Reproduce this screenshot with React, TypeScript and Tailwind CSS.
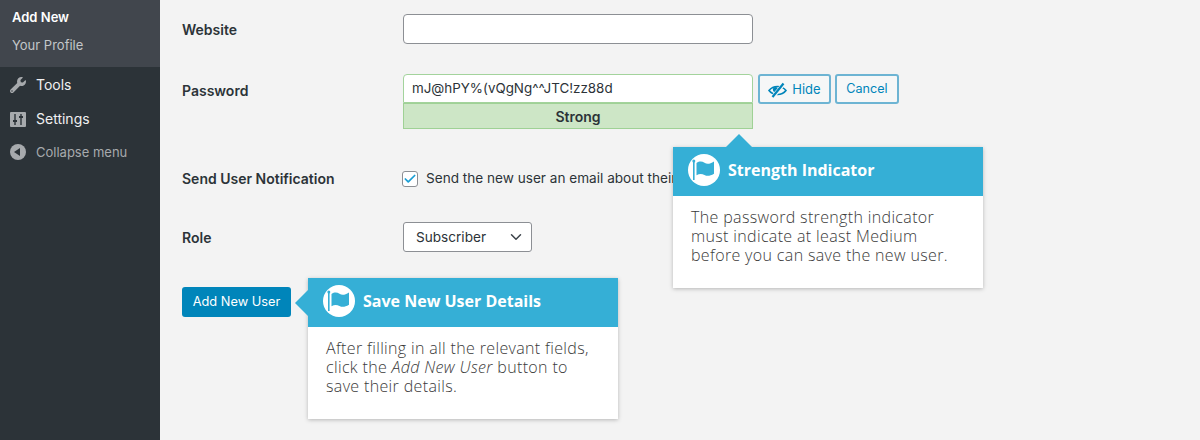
import React from "react";
import { FaWrench } from "react-icons/fa";
import { ChevronDown, Check } from "lucide-react";

const FlagIcon = () => (
  <span className="flex h-8 w-8 shrink-0 items-center justify-center rounded-full bg-white">
    <svg width="26" height="24" viewBox="0 0 26 24" fill="none">
      <rect x="2" y="3" width="1.6" height="19" fill="#35afd6" />
      <circle cx="2.8" cy="3" r="1.5" fill="#35afd6" />
      <path
        d="M5.5 5C8.5 3 11 3.4 13.5 4.8C16 6.2 19 6 23 3.4V15.8C19 18.2 16 18.4 13.5 17C11 15.6 8.5 15.4 5.5 17.2Z"
        fill="#35afd6"
      />
    </svg>
  </span>
);

const SettingsIcon = () => (
  <svg width="16" height="15" viewBox="0 0 16 15">
    <rect width="16" height="15" rx="1" fill="#a7aaad" />
    <path d="M5 2V13M11 2V13" stroke="#2c3338" strokeWidth="1.4" />
    <path d="M3 9H7M9 5H13" stroke="#2c3338" strokeWidth="2" />
  </svg>
);

const EyeSlashIcon = () => (
  <svg width="19" height="16" viewBox="0 0 19 16" fill="none">
    <path d="M1 8.5C3 6 6 4.5 9.5 4.5C13 4.5 16 6 18 8.5C16 11 13 12.5 9.5 12.5C6 12.5 3 11 1 8.5Z" stroke="#0085ba" strokeWidth="1.6" />
    <circle cx="7.5" cy="7.5" r="2.6" fill="#0085ba" />
    <path d="M4.5 15.5L16 1.5" stroke="#f6f7f7" strokeWidth="4" />
    <path d="M4.5 15L15.5 1.5" stroke="#0085ba" strokeWidth="2.2" />
  </svg>
);

type CalloutProps = {
  title: string;
  className: string;
  arrow: React.ReactNode;
  children: React.ReactNode;
};

const Callout = ({ title, className, arrow, children }: CalloutProps) => (
  <div className={`absolute h-[141px] w-[310px] bg-white font-['Open_Sans',sans-serif] shadow-[0_1px_4px_rgba(0,0,0,0.25)] ${className}`}>
    {arrow}
    <div className="flex h-[49px] items-center gap-2 bg-[#35afd6] pb-[3px] pl-[15px]">
      <FlagIcon />
      <h3 className="text-[16px] font-bold text-white">{title}</h3>
    </div>
    <p className="pl-[18px] pr-[26px] pt-[12px] text-[16px] leading-[19px] font-light tracking-[0.35px] text-[#3a3a3a]">
      {children}
    </p>
  </div>
);

const App = () => {
  return (
    <div className="relative flex h-[440px] w-[1200px] overflow-hidden bg-[#f3f3f3] font-['Inter','Liberation_Sans',sans-serif]">
      <aside className="w-[160px] shrink-0 bg-[#2c3338] text-[14px]">
        <div className="flex h-[67px] flex-col gap-[12px] bg-[#41464d] pl-3 pt-[9px] text-[13px] leading-4">
          <span className="font-semibold text-white">Add New</span>
          <span className="text-[#c3c6c9]">Your Profile</span>
        </div>
        <div className="flex items-center gap-[10px] pl-[10px] pt-[9px] text-[#f0f0f1]">
          <FaWrench className="h-4 w-4 text-[#a7aaad]" />
          <span className="leading-[18px]">Tools</span>
        </div>
        <div className="flex items-center gap-[10px] pl-[10px] pt-[16px] text-[#f0f0f1]">
          <SettingsIcon />
          <span className="leading-[18px]">Settings</span>
        </div>
        <div className="flex items-center gap-[10px] pl-[10px] pt-[16px] text-[13px] text-[#a7aaad]">
          <span className="flex h-4 w-4 items-center justify-center rounded-full bg-[#a7aaad]">
            <span className="mr-[2px] h-0 w-0 border-y-[4px] border-r-[6px] border-y-transparent border-r-[#2c3338]" />
          </span>
          <span className="leading-[16px]">Collapse menu</span>
        </div>
      </aside>

      <main className="flex-1 pl-[22px] text-[14px] text-[#2c3338]">
        <div className="mt-[14px] flex items-center">
          <label className="w-[221px] font-semibold">Website</label>
          <div className="h-[30px] w-[350px] rounded-[4px] border border-[#8c8f94] bg-white" />
        </div>

        <div className="mt-[30px] flex items-start">
          <label className="w-[221px] pt-[6px] font-semibold">Password</label>
          <div className="w-[350px]">
            <div className="flex h-[29px] items-center rounded-t-[4px] border border-[#a3d39c] bg-white pl-2 text-[13.4px] text-[#2c3338]">
              mJ@hPY%(vQgNg^^JTC!zz88d
            </div>
            <div className="flex h-[26px] items-center justify-center border border-[#9fd195] bg-[#cde6c6] text-[14px] font-semibold text-[#2c3338]">
              Strong
            </div>
          </div>
          <button
            type="button"
            className="ml-[5px] flex h-[30px] w-[73px] items-center justify-center gap-[5px] rounded-[3px] border-2 border-[#6db4d3] bg-[#f6f7f7] pt-[1px] text-[13px] text-[#0085ba]"
          >
            <EyeSlashIcon />
            Hide
          </button>
          <button
            type="button"
            className="ml-[4px] h-[30px] w-[64px] rounded-[3px] border-2 border-[#6db4d3] bg-[#f6f7f7] pt-[1px] text-[12.6px] text-[#0085ba]"
          >
            Cancel
          </button>
        </div>

        <div className="mt-[39px] flex items-center">
          <label className="w-[221px] font-semibold">Send User Notification</label>
          <span className="-ml-[1px] mr-2 flex h-[16px] w-[16px] items-center justify-center rounded-[3px] border border-[#8c8f94] bg-white">
            <Check className="h-[14px] w-[14px] text-[#1a9ed4]" strokeWidth={3} />
          </span>
          <span className="whitespace-nowrap text-[13.6px]">Send the new user an email about their account.</span>
        </div>

        <div className="mt-[33px] flex items-center">
          <label className="w-[221px] pt-[1px] font-semibold">Role</label>
          <div className="flex h-[30px] w-[129px] items-center justify-between rounded-[3px] border border-[#8c8f94] bg-white pl-3 pr-[6px] text-[13.6px]">
            <span>Subscriber</span>
            <ChevronDown className="h-[18px] w-[18px] text-[#3c434a]" strokeWidth={2} />
          </div>
        </div>

        <button
          type="button"
          className="mt-[35px] h-[30px] w-[109px] rounded-[3px] bg-[#0085ba] text-[12.8px] text-white"
        >
          Add New User
        </button>
      </main>

      <Callout
        title="Strength Indicator"
        className="left-[673px] top-[147px]"
        arrow={
          <span className="absolute -top-[13px] left-[53px] h-0 w-0 border-x-[13px] border-b-[13px] border-x-transparent border-b-[#35afd6]" />
        }
      >
        The password strength indicator must indicate at least Medium before you can save the new user.
      </Callout>

      <Callout
        title="Save New User Details"
        className="left-[308px] top-[278px]"
        arrow={
          <span className="absolute left-[-13px] top-[12px] h-0 w-0 border-y-[13px] border-r-[13px] border-y-transparent border-r-[#35afd6]" />
        }
      >
        After filling in all the relevant fields, click the <em>Add New User</em> button to save their details.
      </Callout>
    </div>
  );
};

export default App;
